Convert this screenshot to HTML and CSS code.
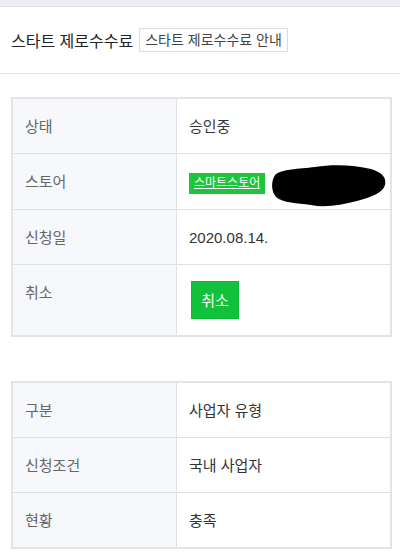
FILE: index.html
```html
<!DOCTYPE html>
<html lang="ko">
<head>
    <meta charset="UTF-8">
    <meta name="viewport" content="width=device-width, initial-scale=1.0">
    <title>스타트 제로수수료</title>
    <link rel="stylesheet" href="styles.css">
</head>
<body>
    <div class="topbar"></div>
    <div class="title-row">
        <h2 class="title">스타트 제로수수료</h2>
        <a class="guide" href="#">스타트 제로수수료 안내</a>
    </div>

    <table class="info-table">
        <tr>
            <th>상태</th>
            <td>승인중</td>
        </tr>
        <tr>
            <th>스토어</th>
            <td class="store-cell">
                <span class="badge">스마트스토어</span>
                <svg class="redact" width="116" height="46" viewBox="0 0 116 46">
                    <path d="M4 12 C10 6 28 6 44 4 C62 1 84 2 100 6 C110 9 116 14 114 22 C112 30 100 34 86 38 C70 42 54 45 40 42 C26 40 12 40 5 34 C0 28 0 18 4 12 Z" fill="#000"/>
                </svg>
            </td>
        </tr>
        <tr>
            <th>신청일</th>
            <td>2020.08.14.</td>
        </tr>
        <tr>
            <th>취소</th>
            <td><button class="cancel-btn">취소</button></td>
        </tr>
    </table>

    <table class="info-table second">
        <tr>
            <th>구분</th>
            <td>사업자 유형</td>
        </tr>
        <tr>
            <th>신청조건</th>
            <td>국내 사업자</td>
        </tr>
        <tr>
            <th>현황</th>
            <td>충족</td>
        </tr>
    </table>
</body>
</html>
```

FILE: styles.css
```css
body {
    font-family: "Liberation Sans", "Noto Sans CJK KR", sans-serif;
    margin: 0;
    padding: 0;
    background: white;
    color: #333;
}
.topbar {
    height: 6px;
    background: #ececf1;
    border-bottom: 1px solid #e0e0e6;
}
.title-row {
    display: flex;
    align-items: center;
    padding: 0 11px;
    height: 66px;
    border-bottom: 1px solid #e3e3e8;
}
.title {
    margin: 0;
    font-size: 16px;
    font-weight: normal;
    color: #222;
}
.guide {
    margin-left: 6px;
    border: 1px solid #dcdcdc;
    padding: 0 5px;
    height: 22px;
    line-height: 22px;
    font-size: 14px;
    color: #444;
    text-decoration: none;
}
.info-table {
    width: 381px;
    margin: 23px 0 0 11px;
    border-collapse: collapse;
    border: 2px solid #e3e3e8;
}
.info-table.second {
    margin-top: 44px;
}
.info-table th,
.info-table td {
    border: 1px solid #dfdfe4;
    padding: 16px 12px 15px;
    text-align: left;
    vertical-align: top;
    font-size: 15px;
    font-weight: normal;
    line-height: 23px;
}
.info-table th {
    width: 139px;
    background: #f7f8fc;
    color: #666;
}
.info-table td {
    color: #333;
}
.store-cell {
    position: relative;
}
.badge {
    display: inline-block;
    background: #1ec43c;
    color: white;
    font-size: 12px;
    line-height: 21px;
    padding: 0 5px;
    text-decoration: underline;
    vertical-align: middle;
}
.redact {
    position: absolute;
    left: 94px;
    top: 9px;
}
.cancel-btn {
    display: block;
    background: #12c13b;
    color: white;
    border: 1px solid #0fb836;
    font-family: "Noto Sans CJK KR", sans-serif;
    font-size: 15px;
    width: 48px;
    height: 38px;
    margin: 0 0 1px 2px;
    padding: 0;
}
```
